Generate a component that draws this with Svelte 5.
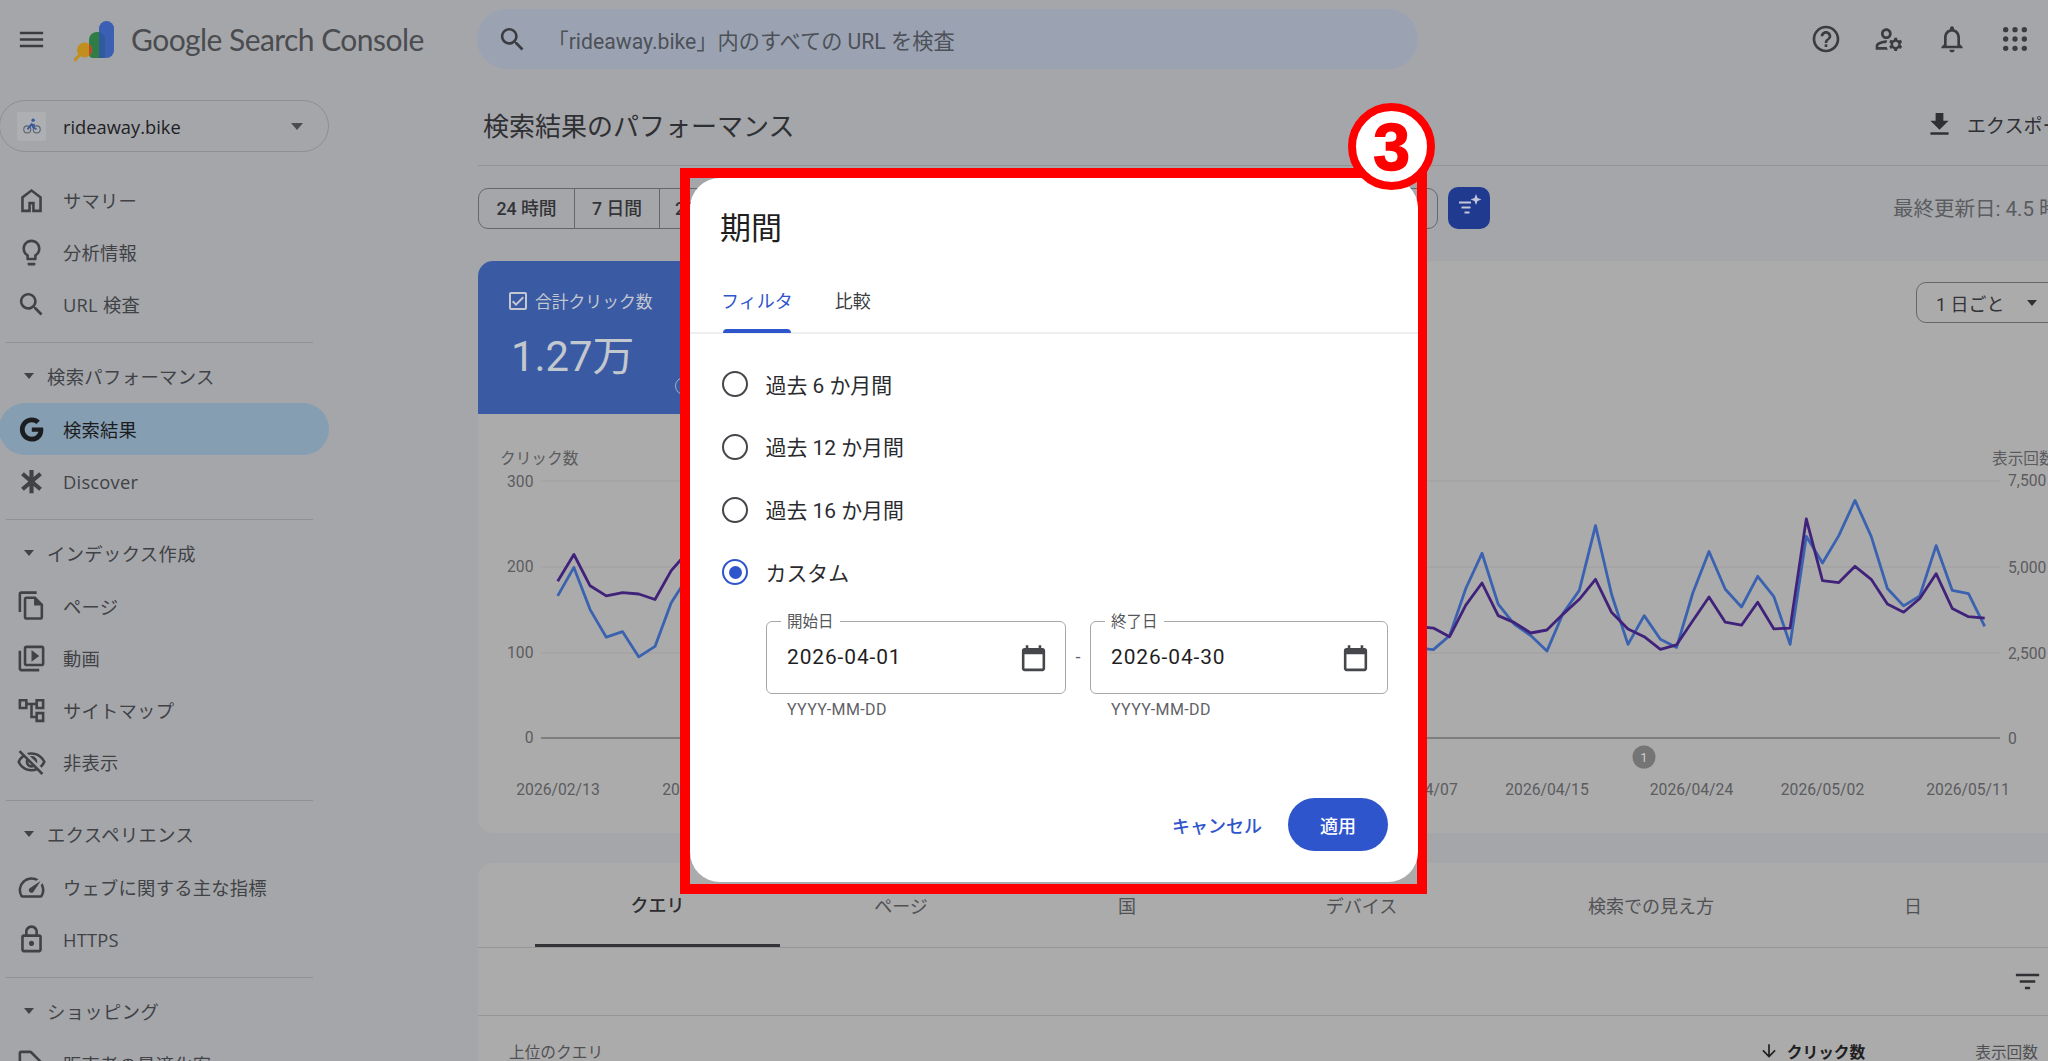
<script>
  const P = {
    menu: 'M3 18h18v-2H3v2zm0-5h18v-2H3v2zm0-7v2h18V6H3z',
    search: 'M15.5 14h-.79l-.28-.27C15.41 12.59 16 11.11 16 9.5 16 5.91 13.09 3 9.5 3S3 5.91 3 9.5 5.91 16 9.5 16c1.61 0 3.09-.59 4.23-1.57l.27.28v.79l5 4.99L20.49 19l-4.99-5zm-6 0C7.01 14 5 11.99 5 9.5S7.01 5 9.5 5 14 7.01 14 9.5 11.99 14 9.5 14z',
    home: 'M6 19h3.5v-6h5v6H18v-9l-6-4.5L6 10zm-2 2V9l8-6 8 6v12h-7.5v-6h-1v6z',
    bulb: 'M9 21c0 .5.4 1 1 1h4c.6 0 1-.5 1-1v-1H9v1zm3-19C8.1 2 5 5.1 5 9c0 2.4 1.2 4.5 3 5.7V17c0 .5.4 1 1 1h6c.6 0 1-.5 1-1v-2.3c1.8-1.3 3-3.4 3-5.7 0-3.9-3.1-7-7-7zm2.9 11.1l-.9.6V16h-4v-2.3l-.9-.6C7.8 12.2 7 10.7 7 9c0-2.8 2.2-5 5-5s5 2.2 5 5c0 1.7-.8 3.2-2.1 4.1z',
    google: 'M12.24 10.4v3.4h5c-.2 1.3-1.5 3.8-5 3.8-3 0-5.5-2.5-5.5-5.6s2.5-5.6 5.5-5.6c1.7 0 2.9.7 3.5 1.4l2.7-2.6C16.7 3.6 14.7 2.7 12.24 2.7 7.1 2.7 3 6.9 3 12s4.1 9.3 9.24 9.3c5.3 0 8.9-3.8 8.9-9 0-.6-.1-1.1-.2-1.9z',
    page: 'M16 1H4c-1.1 0-2 .9-2 2v14h2V3h12V1zm-1 4H8c-1.1 0-1.99.9-1.99 2L6 21c0 1.1.89 2 1.99 2H19c1.1 0 2-.9 2-2V11l-6-6zM8 21V7h6v5h5v9H8z',
    video: 'M4 6H2v14c0 1.1.9 2 2 2h14v-2H4V6zm16-4H8c-1.1 0-2 .9-2 2v12c0 1.1.9 2 2 2h12c1.1 0 2-.9 2-2V4c0-1.1-.9-2-2-2zm0 14H8V4h12v12zM12 5.5v9l6-4.5z',
    tree: 'M22 11V3h-7v3H9V3H2v8h7V8h2v10h4v3h7v-8h-7v3h-2V8h2v3h7zM7 9H4V5h3v4zm10 6h3v4h-3v-4zm0-10h3v4h-3V5z',
    hide: 'M12 6c3.79 0 7.17 2.13 8.82 5.5-.59 1.22-1.42 2.27-2.41 3.12l1.41 1.41c1.39-1.23 2.49-2.77 3.18-4.53C21.27 7.11 17 4 12 4c-1.27 0-2.49.2-3.64.57l1.65 1.65C10.66 6.09 11.32 6 12 6zm-1.07 1.14L13 9.21c.57.25 1.03.71 1.28 1.28l2.07 2.07c.08-.34.14-.7.14-1.07C16.5 9.01 14.48 7 12 7c-.37 0-.72.05-1.07.14zM2.01 3.87l2.68 2.68C3.06 7.83 1.77 9.53 1 11.5 2.73 15.89 7 19 12 19c1.52 0 2.98-.29 4.32-.82l3.42 3.42 1.41-1.41L3.42 2.45 2.01 3.87zm7.5 7.5l2.61 2.61c-.04.01-.08.02-.12.02-1.38 0-2.5-1.12-2.5-2.5 0-.05.01-.08.01-.13zm-3.4-3.4l1.75 1.75c-.23.55-.36 1.15-.36 1.78 0 2.48 2.02 4.5 4.5 4.5.63 0 1.23-.13 1.77-.36l.98.98c-.88.24-1.8.38-2.75.38-3.79 0-7.17-2.13-8.82-5.5.7-1.43 1.72-2.61 2.93-3.53z',
    speed: 'M20.38 8.57l-1.23 1.85a8 8 0 0 1-.22 7.58H5.07A8 8 0 0 1 15.58 6.85l1.85-1.23A10 10 0 0 0 3.35 19a2 2 0 0 0 1.72 1h13.85a2 2 0 0 0 1.74-1 10 10 0 0 0-.27-10.44zm-9.79 6.84a2 2 0 0 0 2.83 0l5.66-8.49-8.49 5.66a2 2 0 0 0 0 2.83z',
    lock: 'M18 8h-1V6c0-2.76-2.24-5-5-5S7 3.24 7 6v2H6c-1.1 0-2 .9-2 2v10c0 1.1.9 2 2 2h12c1.1 0 2-.9 2-2V10c0-1.1-.9-2-2-2zM9 6c0-1.66 1.34-3 3-3s3 1.34 3 3v2H9V6zm9 14H6V10h12v10zm-6-3c1.1 0 2-.9 2-2s-.9-2-2-2-2 .9-2 2 .9 2 2 2z',
    tag: 'M21.4 11.6l-9-9C12 2.2 11.5 2 11 2H4c-1.1 0-2 .9-2 2v7c0 .6.2 1.1.6 1.4l9 9c.4.4.9.6 1.4.6s1-.2 1.4-.6l7-7c.4-.4.6-.9.6-1.4s-.2-1-.6-1.4zM13 20L4 11V4h7l9 9-7 7z',
    help: 'M11 18h2v-2h-2v2zm1-16C6.48 2 2 6.48 2 12s4.48 10 10 10 10-4.48 10-10S17.52 2 12 2zm0 18c-4.41 0-8-3.59-8-8s3.59-8 8-8 8 3.59 8 8-3.59 8-8 8zm0-14c-2.21 0-4 1.79-4 4h2c0-1.1.9-2 2-2s2 .9 2 2c0 2-3 1.75-3 5h2c0-2.25 3-2.5 3-5 0-2.21-1.79-4-4-4z',
    admin: 'M4 18v-.65c0-.34.16-.66.41-.81C6.1 15.53 8.03 15 10 15c.03 0 .05 0 .08.01.1-.7.3-1.37.59-1.98-.22-.02-.44-.03-.67-.03-2.42 0-4.68.67-6.61 1.82-.88.52-1.39 1.5-1.39 2.53V20h9.26c-.42-.6-.75-1.28-.97-2H4zM10 12c2.21 0 4-1.79 4-4s-1.79-4-4-4-4 1.79-4 4 1.79 4 4 4zm0-6c1.1 0 2 .9 2 2s-.9 2-2 2-2-.9-2-2 .9-2 2-2zM20.75 16c0-.22-.03-.42-.06-.63l1.14-1.01-1-1.73-1.45.49c-.32-.27-.68-.48-1.08-.63L18 11h-2l-.3 1.49c-.4.15-.76.36-1.08.63l-1.45-.49-1 1.73 1.14 1.01c-.03.21-.06.41-.06.63s.03.42.06.63l-1.14 1.01 1 1.73 1.45-.49c.32.27.68.48 1.08.63L16 21h2l.3-1.49c.4-.15.76-.36 1.08-.63l1.45.49 1-1.73-1.14-1.01c.03-.21.06-.41.06-.63zM17 18c-1.1 0-2-.9-2-2s.9-2 2-2 2 .9 2 2-.9 2-2 2z',
    bell: 'M12 22c1.1 0 2-.9 2-2h-4c0 1.1.9 2 2 2zm6-6v-5c0-3.07-1.63-5.64-4.5-6.32V4c0-.83-.67-1.5-1.5-1.5s-1.5.67-1.5 1.5v.68C7.64 5.36 6 7.92 6 11v5l-2 2v1h16v-1l-2-2zm-2 1H8v-6c0-2.48 1.51-4.5 4-4.5s4 2.02 4 4.5v6z',
    download: 'M19 9h-4V3H9v6H5l7 7 7-7zM5 18v2h14v-2H5z',
    calendar: 'M19 3h-1V1h-2v2H8V1H6v2H5c-1.11 0-1.99.9-1.99 2L3 19c0 1.1.89 2 2 2h14c1.1 0 2-.9 2-2V5c0-1.1-.9-2-2-2zm0 16H5V8h14v11z',
    filter: 'M10 18h4v-2h-4v2zM3 6v2h18V6H3zm3 7h12v-2H6v2z',
    down: 'M20 12l-1.41-1.41L13 16.17V4h-2v12.17l-5.58-5.59L4 12l8 8 8-8z',
    check: 'M19 3H5c-1.1 0-2 .9-2 2v14c0 1.1.9 2 2 2h14c1.1 0 2-.9 2-2V5c0-1.1-.9-2-2-2zm0 16H5V5h14v14zM17.99 9l-1.41-1.42-6.59 6.59-2.58-2.57-1.42 1.41 4 3.99z'
  };

  const sections = [
    { items: [
      { icon: P.home, label: 'サマリー' },
      { icon: P.bulb, label: '分析情報' },
      { icon: P.search, label: 'URL 検査' }
    ] },
    { title: '検索パフォーマンス', items: [
      { icon: P.google, label: '検索結果', active: true },
      { icon: 'star', label: 'Discover' }
    ] },
    { title: 'インデックス作成', items: [
      { icon: P.page, label: 'ページ' },
      { icon: P.video, label: '動画' },
      { icon: P.tree, label: 'サイトマップ' },
      { icon: P.hide, label: '非表示' }
    ] },
    { title: 'エクスペリエンス', items: [
      { icon: P.speed, label: 'ウェブに関する主な指標' },
      { icon: P.lock, label: 'HTTPS' }
    ] },
    { title: 'ショッピング', items: [
      { icon: P.tag, label: '販売者の最適化案' }
    ] }
  ];

  // The chart is laid out in page pixels minus this origin.
  const OX = 478, OY = 414;
  const X = (i) => 557.7 + i * 16.216 - OX;
  const leftY = (py) => 100 + py / 2.178 - OY;
  const rightY = (py) => 480 + py / 2.7 - OY;

  const blueL = [1080, 1018, 1110, 1170, 1158, 1213, 1190, 1095, 1040];
  const purpleL = [1048, 990, 1058, 1080, 1073, 1076, 1088, 1025, 985];
  const blueR = [458,420,293,198,335,390,420,462,360,298,123,310,444,366,430,452,305,193,295,343,260,315,444,152,224,150,55,152,293,340,313,177,298,307,395];
  const purpleR = [400,423,338,278,366,385,413,405,362,322,268,358,402,423,457,445,380,316,384,392,330,402,400,105,272,277,233,268,335,357,320,253,347,369,373];

  const line = (l, r) =>
    [...l.map((y, i) => `${X(i).toFixed(1)},${leftY(y).toFixed(1)}`),
     ...r.map((y, i) => `${X(i + 54).toFixed(1)},${rightY(y).toFixed(1)}`)].join(' ');

  const grid = [481, 567, 653];
  const leftTicks = [['300', 481], ['200', 566], ['100', 652], ['0', 737]];
  const rightTicks = [['7,500', 480], ['5,000', 567], ['2,500', 653], ['0', 738]];
  const dates = [['2026/02/13', 558], ['2026/02/22', 704], ['2026/04/07', 1416], ['2026/04/15', 1547], ['2026/04/24', 1691.5], ['2026/05/02', 1822.5], ['2026/05/11', 1968]];

  const tabs = [['クエリ', 245, true], ['ページ', 242], ['国', 210], ['デバイス', 259], ['検索での見え方', 320], ['日', 204]];
  const ranges = ['過去 6 か月間', '過去 12 か月間', '過去 16 か月間'];
</script>

{#snippet ic(d, size = 31)}
  <svg class="ic" width={size} height={size} viewBox="0 0 24 24" fill="currentColor"><path {d} /></svg>
{/snippet}

<div class="app">
  <header class="topbar">
    <span class="menu">{@render ic(P.menu)}</span>
    <svg class="logo" width="42" height="41" viewBox="0 0 42 41">
      <rect x="25" y="0" width="15" height="37" rx="7.5" fill="#3b5fb3" />
      <path d="M25 37h-6a4 4 0 0 1-4-4V19a8 8 0 0 1 8-8h2z" fill="#2f7d45" />
      <path d="M25 11.5a8 8 0 0 1 6 7.5V37h-6z" fill="#2f5a9c" />
      <circle cx="10.5" cy="29" r="7.5" fill="#c18f1d" />
      <path d="M15 23A7.5 7.5 0 0 1 15 35z" fill="#b9482f" />
      <path d="M5 34.5L1 39" stroke="#c18f1d" stroke-width="3" stroke-linecap="round" />
    </svg>
    <span class="brand">Google Search Console</span>
    <div class="searchbox">
      <span class="searchicon">{@render ic(P.search)}</span>
      <span>「rideaway.bike」内のすべての URL を検査</span>
    </div>
    <div class="topicons">
      {@render ic(P.help, 32)}
      {@render ic(P.admin, 32)}
      {@render ic(P.bell, 32)}
      <svg class="ic" width="32" height="32" viewBox="0 0 24 24" fill="currentColor">
        {#each [5, 12, 19] as y}
          {#each [5, 12, 19] as x}
            <circle cx={x} cy={y} r="2" />
          {/each}
        {/each}
      </svg>
    </div>
  </header>

  <aside class="side">
    <div class="property">
      <span class="favicon">
        <svg width="18" height="18" viewBox="0 0 16 16" fill="none" stroke="#5a6472" stroke-width="1">
          <circle cx="3.8" cy="11" r="3.1" /><circle cx="12.2" cy="11" r="3.1" />
          <path d="M4 11l3.5-4.5L9 9l3 2M7.5 6.5l3 .8" stroke="#33589f" stroke-width="1.6" />
          <circle cx="9" cy="2.8" r="1.5" fill="#33589f" stroke="none" />
        </svg>
      </span>
      <span class="propname">rideaway.bike</span>
      <span class="caret"></span>
    </div>
    {#each sections as s, i}
      {#if i > 0}<div class="rule"></div>{/if}
      {#if s.title}
        <div class="sect"><span class="tri"></span>{s.title}</div>
      {/if}
      {#each s.items as it}
        <div class="nav" class:active={it.active}>
          {#if it.icon === 'star'}
            <svg class="ic" width="31" height="31" viewBox="0 0 24 24" stroke="currentColor" stroke-width="3.2">
              <path d="M12 3v18M5 6l14 12M5 18L19 6" />
            </svg>
          {:else}
            {@render ic(it.icon)}
          {/if}
          <span>{it.label}</span>
        </div>
      {/each}
    {/each}
  </aside>

  <main class="main">
    <div class="head">
      <h1>検索結果のパフォーマンス</h1>
      <div class="export">{@render ic(P.download)}<span>エクスポート</span></div>
    </div>

    <div class="toolbar">
      <div class="seg">
        <span class="b1">24 時間</span>
        <span class="b2">7 日間</span>
        <span class="b3">28 日間</span>
      </div>
      <span class="magic">
        <svg width="42" height="42" viewBox="0 0 42 42" fill="#c3c7d6">
          <rect x="11" y="14.5" width="12" height="2" />
          <rect x="13.5" y="19.5" width="9" height="2" />
          <rect x="16.5" y="24.5" width="5" height="2" />
          <path d="M28 7l1.5 4 4 1.5-4 1.5-1.5 4-1.5-4-4-1.500 4-1.500z" />
        </svg>
      </span>
      <span class="updated">最終更新日: 4.5 時間前</span>
    </div>

    <section class="chartcard">
      <div class="metrics">
        <div class="metric">
          <div class="mlabel">{@render ic(P.check, 24)}<span>合計クリック数</span></div>
          <div class="mvalue">1.27万</div>
          <span class="minfo"></span>
        </div>
        <div class="select"><span>1 日ごと</span><span class="tri dark"></span></div>
      </div>
      <svg class="chart" width="1590" height="419" viewBox="0 0 1590 419">
        {#each grid as y}
          <line x1={541 - OX} x2={2000 - OX} y1={y - OY} y2={y - OY} class="g" />
        {/each}
        <line x1={541 - OX} x2={2000 - OX} y1={738 - OY} y2={738 - OY} class="g0" />
        <text x={500 - OX} y={464 - OY} class="t">クリック数</text>
        <text x={1992 - OX} y={464 - OY} class="t">表示回数</text>
        {#each leftTicks as [l, y]}
          <text x={533.5 - OX} y={y - OY + 6} text-anchor="end" class="t">{l}</text>
        {/each}
        {#each rightTicks as [l, y]}
          <text x={2008 - OX} y={y - OY + 6} class="t">{l}</text>
        {/each}
        {#each dates as [l, x]}
          <text x={x - OX} y={795 - OY} text-anchor="middle" class="t">{l}</text>
        {/each}
        <polyline points={line(blueL, blueR)} class="lb" />
        <polyline points={line(purpleL, purpleR)} class="lp" />
        <circle cx={1644 - OX} cy={757 - OY} r="11.5" fill="#757575" />
        <text x={1644 - OX} y={762 - OY} text-anchor="middle" class="badge">1</text>
      </svg>
    </section>

    <section class="tablecard">
      <div class="tabs">
        {#each tabs as [l, w, on]}
          <div class="tab" class:on style:width="{w}px">{l}</div>
        {/each}
      </div>
      <div class="filterrow">{@render ic(P.filter)}</div>
      <div class="thead">
        <span class="q">上位のクエリ</span>
        <span class="cl">{@render ic(P.down, 20)}クリック数</span>
        <span class="im">表示回数</span>
      </div>
    </section>
  </main>

  <div class="frame">
    <div class="modal">
      <h2>期間</h2>
      <div class="mtabs">
        <span class="mtab on">フィルタ</span>
        <span class="mtab">比較</span>
      </div>
      <div class="radios">
        {#each ranges as r}
          <div class="radio"><span class="dot"></span><span class="rt">{r}</span></div>
        {/each}
        <div class="radio"><span class="dot sel"></span><span class="rt">カスタム</span></div>
      </div>
      <div class="dates">
        <div class="dcol">
          <div class="field">
            <span class="flabel">開始日</span>
            <span class="fval">2026-04-01</span>
            <span class="cal">{@render ic(P.calendar)}</span>
          </div>
          <div class="hint">YYYY-MM-DD</div>
        </div>
        <span class="dash">-</span>
        <div class="dcol">
          <div class="field">
            <span class="flabel">終了日</span>
            <span class="fval">2026-04-30</span>
            <span class="cal">{@render ic(P.calendar)}</span>
          </div>
          <div class="hint">YYYY-MM-DD</div>
        </div>
      </div>
      <div class="actions">
        <span class="cancel">キャンセル</span>
        <span class="apply">適用</span>
      </div>
    </div>
  </div>
  <div class="num"><span>3</span></div>
</div>

<style>
  :global(body) { margin: 0; }
  .app {
    position: relative; width: 2048px; height: 1061px; overflow: hidden;
    display: grid; grid-template-columns: 478px 1fr; grid-template-rows: 78px 1fr;
    background: #a5a6aa; color: #404246;
    font-family: Roboto, "Noto Sans CJK JP", sans-serif; font-size: 18px;
  }
  .ic { display: block; flex: none; }
  .topbar { grid-column: 1 / -1; display: flex; align-items: center; }
  .menu { margin-left: 16px; color: #3a3c40; }
  .logo { margin-left: 27px; margin-top: 5px; }
  .brand { margin-left: 15px; width: 346px; flex: none; font-family: Lato, sans-serif; font-size: 30px; letter-spacing: -.55px; color: #4a4c50; white-space: nowrap; }
  .searchbox {
    width: 941px; height: 60px; border-radius: 30px; background: #9ba3b3;
    display: flex; align-items: center; color: #4d5158; font-size: 21.2px; white-space: nowrap;
  }
  .searchicon { margin-left: 20px; margin-right: 19.5px; color: #3a3c40; }
  .topicons { margin-left: auto; margin-right: 17px; display: flex; gap: 31px; color: #3a3c40; }

  .side { padding-top: 22px; }
  .property {
    margin-left: -1px; width: 330px; height: 52px; box-sizing: border-box;
    border: 1.3px solid #8e8f93; border-radius: 26px;
    display: flex; align-items: center; margin-bottom: 22px;
  }
  .favicon { margin-left: 17px; width: 29px; height: 29px; background: #aeafb2; border-radius: 2px; display: flex; align-items: center; justify-content: center; }
  .propname { margin-left: 17px; color: #202124; font-family: "Open Sans", "Noto Sans CJK JP", sans-serif; font-size: 18.3px; }
  .caret { margin-left: auto; margin-right: 25px; border: 6px solid transparent; border-top: 7px solid #4a4c50; border-bottom: 0; }
  .nav { height: 52.2px; padding-left: 16px; display: flex; align-items: center; gap: 16px; white-space: nowrap; color: #404246; font-family: "Open Sans", "Noto Sans CJK JP", sans-serif; font-size: 18.3px; letter-spacing: .25px; }
  .nav.active { margin-left: -1px; padding-left: 17px; width: 330px; box-sizing: border-box; height: 52px; border-radius: 26px; background: #869eb2; color: #1c1d20; }
  .rule { height: 1px; background: #8f9094; margin: 11.5px 165px 8px 6px; }
  .sect { height: 52px; box-sizing: border-box; padding-bottom: 1.5px; display: flex; align-items: center; padding-left: 24px; white-space: nowrap; color: #404246; font-size: 18.3px; letter-spacing: .4px; }
  .tri { border: 5.5px solid transparent; border-top: 6px solid #404246; border-bottom: 0; margin-right: 13px; }
  .tri.dark { margin-right: 0; margin-left: 22px; border-width: 6px 5.5px 0; border-top-color: #303134; }

  .main { min-width: 0; overflow: hidden; }
  .head { height: 88px; box-sizing: border-box; border-bottom: 1px solid #929397; display: flex; align-items: center; padding-left: 5px; padding-top: 6px; }
  h1 { margin: 0; font-size: 26px; font-weight: 400; color: #2f3033; }
  .export { margin-left: auto; width: 124px; flex: none; display: flex; align-items: center; gap: 12px; white-space: nowrap; overflow: hidden; color: #2f3033; font-size: 19px; }
  .toolbar { margin-top: 21px; height: 42px; display: flex; align-items: center; }
  .seg { width: 960px; height: 41px; box-sizing: border-box; border: 1.3px solid #66676b; border-radius: 10px; display: flex; align-items: center; font-size: 17.8px; font-weight: 500; color: #333437; }
  .seg span { height: 100%; padding-bottom: 1.5px; display: flex; align-items: center; justify-content: center; box-sizing: border-box; }
  .b1 { width: 96px; border-right: 1.3px solid #66676b; }
  .b2 { width: 85px; border-right: 1.3px solid #66676b; }
  .b3 { width: 90px; }
  .magic { margin-left: 10px; width: 42px; height: 42px; border-radius: 10px; background: #1f3a8f; display: flex; align-items: center; justify-content: center; }
  .updated { margin-left: auto; width: 155px; flex: none; white-space: nowrap; overflow: hidden; color: #5a5c60; font-size: 20.5px; margin-top: -3px; }

  .chartcard { margin-top: 32px; width: 1590px; height: 572px; background: #ababab; border-radius: 15px 0 0 15px; overflow: hidden; }
  .metrics { height: 153px; display: flex; align-items: flex-start; }
  .metric { position: relative; width: 212px; height: 153px; box-sizing: border-box; background: #3a5ba4; padding: 28px 0 0 28px; color: #c3c7ce; }
  .mlabel { display: flex; align-items: center; gap: 5px; font-size: 16.8px; white-space: nowrap; }
  .mvalue { margin: 16px 0 0 5px; font-size: 41.8px; line-height: 56px; font-weight: 400; }
  .minfo { position: absolute; left: 197px; top: 116px; width: 18px; height: 18px; box-sizing: border-box; border: 1.5px solid #a5adc4; border-radius: 50%; }
  .select { margin: 21px 10px 0 auto; width: 142px; height: 41px; box-sizing: border-box; border: 1.3px solid #66676b; border-radius: 10px; display: flex; align-items: center; padding-left: 19px; color: #333437; white-space: nowrap; }
  .chart { display: block; }
  .g { stroke: #9f9f9f; stroke-width: 1; }
  .g0 { stroke: #6f6f6f; stroke-width: 1.3; }
  .t { font-size: 15.7px; fill: #5b5c5f; }
  .lb, .lp { fill: none; stroke-width: 2.8; stroke-linejoin: round; }
  .lb { stroke: #3a62b0; }
  .lp { stroke: #40227b; }
  .badge { font-size: 13px; fill: #c9c9c9; }

  .tablecard { margin-top: 30px; width: 1590px; height: 260px; background: #ababab; border-radius: 15px 0 0 0; }
  .tabs { height: 84px; box-sizing: content-box; border-bottom: 1.3px solid #969696; display: flex; padding-left: 57px; }
  .tab { display: flex; align-items: center; justify-content: center; height: 84px; box-sizing: border-box; color: #505154; white-space: nowrap; }
  .tab.on { color: #2b2c2f; font-weight: 500; border-bottom: 3px solid #333437; }
  .filterrow { height: 67px; border-bottom: 1.3px solid #969696; display: flex; align-items: center; justify-content: flex-end; padding-right: 25px; color: #303134; }
  .thead { display: grid; grid-template-columns: 1fr auto auto; column-gap: 110px; align-items: center; height: 70px; padding: 0 30px 0 31px; font-size: 15.7px; color: #505154; }
  .cl { display: flex; align-items: center; gap: 8px; font-weight: 700; color: #1f2022; }

  .frame { position: absolute; left: 680px; top: 168px; width: 747px; height: 726px; box-sizing: border-box; border: 10px solid #f00; }
  .modal { width: 728px; height: 704px; background: #fff; border-radius: 30px; display: flex; flex-direction: column; color: #202124; }
  h2 { margin: 30px 0 0 30px; font-size: 31px; line-height: 42px; font-weight: 400; color: #1f1f1f; }
  .mtabs { margin-top: 30px; height: 54px; box-sizing: border-box; border-bottom: 2px solid #eeeff0; display: flex; gap: 42px; padding: 10px 0 0 31px; line-height: 24px; color: #3c3e42; }
  .mtab { position: relative; height: 42px; }
  .mtab.on { color: #2f55cc; }
  .mtab.on::after { content: ""; position: absolute; left: 2px; right: 2px; bottom: -1px; height: 4px; background: #2f55cc; border-radius: 4px 4px 0 0; }
  .radios { padding: 19px 0 0 32px; }
  .radio { height: 62.7px; display: flex; align-items: center; gap: 17.5px; color: #2a2b2e; font-size: 20.9px; }
  .rt { margin-bottom: 1.5px; }
  .dot { width: 26px; height: 26px; box-sizing: border-box; border: 2.6px solid #43464a; border-radius: 50%; display: flex; align-items: center; justify-content: center; }
  .dot.sel { border-color: #2f55cc; }
  .dot.sel::after { content: ""; width: 13px; height: 13px; border-radius: 50%; background: #2f55cc; }
  .dates { margin-top: 17px; padding-left: 76px; display: flex; }
  .dcol { width: 300px; }
  .dcol:last-child { width: 298px; }
  .field { position: relative; height: 73px; box-sizing: border-box; border: 1.3px solid #a8a8a8; border-radius: 6px; padding: 21px 16px 0 20px; display: flex; align-items: flex-start; justify-content: space-between; }
  .flabel { position: absolute; left: 14px; top: -9px; padding: 0 6px; background: #fff; font-size: 15.5px; line-height: 18px; color: #55575b; }
  .fval { font-size: 20.9px; line-height: 28px; letter-spacing: .9px; color: #1f1f1f; }
  .cal { margin-top: 1px; color: #45474b; }
  .hint { margin-top: 6px; padding-left: 21px; font-size: 16px; line-height: 20px; letter-spacing: .35px; color: #5f6368; }
  .dash { width: 24px; padding-top: 26px; text-align: center; line-height: 20px; color: #666; }
  .actions { margin-top: auto; padding: 0 30px 31px 0; display: flex; align-items: center; justify-content: flex-end; gap: 26px; font-weight: 500; color: #2f55cc; }
  .apply { width: 100px; height: 53px; border-radius: 27px; background: #2f55cc; color: #fff; display: flex; align-items: center; justify-content: center; }
  .num { position: absolute; left: 1348px; top: 103px; width: 87px; height: 87px; box-sizing: border-box; border: 8px solid #f00; border-radius: 50%; background: #fff; display: flex; align-items: center; justify-content: center; color: #f00; font-family: "Liberation Sans", sans-serif; font-weight: 700; font-size: 66px; }
  .num span { -webkit-text-stroke: 1.5px #f00; line-height: 1; }
</style>
